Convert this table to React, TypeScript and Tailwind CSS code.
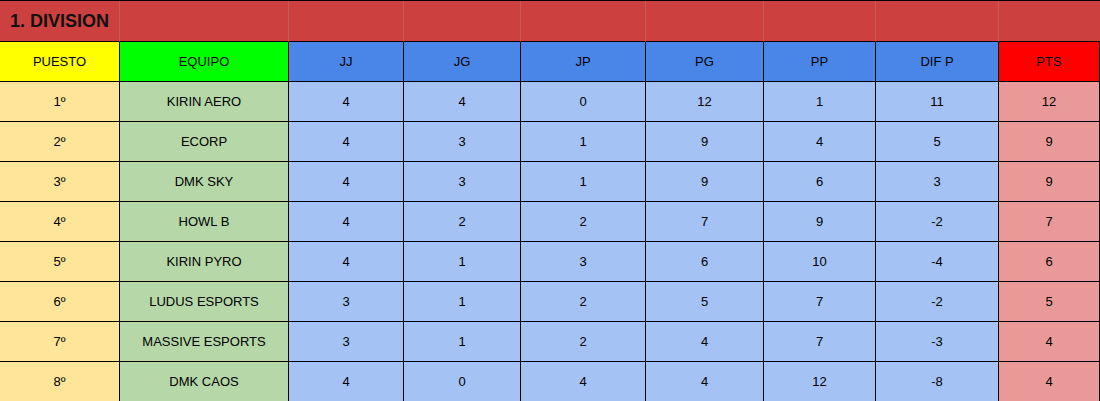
import React from "react";

const rows = [
  ["1º", "KIRIN AERO", "4", "4", "0", "12", "1", "11", "12"],
  ["2º", "ECORP", "4", "3", "1", "9", "4", "5", "9"],
  ["3º", "DMK SKY", "4", "3", "1", "9", "6", "3", "9"],
  ["4º", "HOWL B", "4", "2", "2", "7", "9", "-2", "7"],
  ["5º", "KIRIN PYRO", "4", "1", "3", "6", "10", "-4", "6"],
  ["6º", "LUDUS ESPORTS", "3", "1", "2", "5", "7", "-2", "5"],
  ["7º", "MASSIVE ESPORTS", "3", "1", "2", "4", "7", "-3", "4"],
  ["8º", "DMK CAOS", "4", "0", "4", "4", "12", "-8", "4"],
];

const headers = ["PUESTO", "EQUIPO", "JJ", "JG", "JP", "PG", "PP", "DIF P", "PTS"];

const headBg = (i: number) =>
  i === 0 ? "bg-[#ffff00]" : i === 1 ? "bg-[#00ff00]" : i === 8 ? "bg-[#ff0000]" : "bg-[#4a86e8]";
const bodyBg = (i: number) =>
  i === 0 ? "bg-[#ffe599]" : i === 1 ? "bg-[#b6d7a8]" : i === 8 ? "bg-[#ea9999]" : "bg-[#a4c2f4]";

export default function App() {
  return (
    <div
      className="w-[1100px] h-[401px] overflow-hidden bg-white text-black"
      style={{ fontFamily: '"Liberation Sans", Arial, sans-serif' }}
    >
      <div className="grid grid-cols-[120px_169px_115px_117px_125px_118px_112px_123px_101px] border-t border-black">
        {headers.map((_, i) => (
          <div
            key={"t" + i}
            className={`h-[41px] bg-[#cc4040] border-b border-black ${i < 8 ? "border-r border-r-[#c45a5a]" : ""} flex items-center`}
          >
            {i === 0 && (
              <span className="pl-[10px] pt-[1px] text-[18px] font-bold whitespace-nowrap text-[#111]">1. DIVISION</span>
            )}
          </div>
        ))}
        {headers.map((h, i) => (
          <div
            key={"h" + i}
            className={`h-[40px] ${headBg(i)} border-b border-r border-black flex items-center justify-center text-[13px]`}
          >
            {h}
          </div>
        ))}
        {rows.map((r, ri) =>
          r.map((c, i) => (
            <div
              key={ri + "-" + i}
              className={`h-[40px] ${bodyBg(i)} border-b border-r border-black flex items-center justify-center text-[13px]`}
            >
              {c}
            </div>
          ))
        )}
      </div>
    </div>
  );
}
